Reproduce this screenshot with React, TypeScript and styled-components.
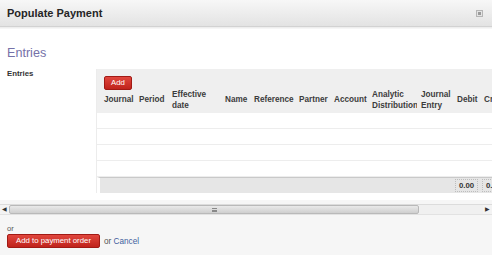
import React from "react";
import styled, { createGlobalStyle } from "styled-components";

const Global = createGlobalStyle`
  html, body { margin: 0; padding: 0; }
  body {
    width: 492px; height: 255px; overflow: hidden;
    background: #f6f6f6;
    font-family: "Liberation Sans", Arial, sans-serif;
  }
`;

const Dialog = styled.div`
  width: 492px; height: 255px;
  display: flex; flex-direction: column;
  overflow: hidden;
`;

const TitleBar = styled.div`
  height: 26px;
  flex: none;
  display: flex; align-items: center; justify-content: space-between;
  padding: 0 9px 0 7px;
  background: linear-gradient(#f7f7f7, #e3e3e3);
  border-bottom: 1px solid #d2d2d2;
  box-shadow: 0 1px 0 #eeeeee;
  margin-bottom: 2px;
`;

const Title = styled.div`
  font-size: 11px; font-weight: bold; color: #252525;
`;

const Body = styled.div`
  background: #fff;
  height: 171px;
  flex: none;
  padding-top: 16px;
  box-sizing: border-box;
  overflow: hidden;
`;

const Heading = styled.div`
  font-size: 12.6px; color: #7571a8;
  line-height: 16px; height: 16px;
  padding-left: 7px;
  margin-bottom: 8px;
`;

const FormRow = styled.div`
  display: flex;
`;

const Label = styled.div`
  width: 96px; flex: none;
  padding-left: 7px; box-sizing: border-box;
  font-size: 7.8px; font-weight: bold; color: #333;
  line-height: 10px;
`;

const Grid = styled.div`
  flex: none;
  width: 560px;
  border-left: 1px solid #ececec;
`;

const Toolbar = styled.div`
  height: 17px; background: #efefef;
  padding: 2px 0 0 7px; box-sizing: border-box;
`;

const RedButton = styled.button<{ $wide?: boolean }>`
  height: 14px;
  padding: 0 ${(p) => (p.$wide ? "8px" : "6px")};
  border: 1px solid #a11a15;
  border-radius: 2px;
  background: linear-gradient(#e0463d, #c0231c);
  color: #fff;
  font-family: "Liberation Sans", Arial, sans-serif;
  font-size: 7.8px;
  line-height: 12px;
  cursor: pointer;
`;

const Table = styled.table`
  border-collapse: separate;
  border-spacing: 0;
  table-layout: fixed;
  width: 560px;
`;

const Th = styled.th<{ $w: number; $first?: boolean }>`
  box-sizing: border-box;
  width: ${(p) => p.$w}px;
  height: 27px;
  padding: 0 3px 0 ${(p) => (p.$first ? "7px" : "4px")};
  background: #efefef;
  font-size: 8.2px; font-weight: bold; color: #3c3c3c;
  text-align: left; vertical-align: middle;
  line-height: 11px;
  white-space: nowrap;
  overflow: hidden;
`;

const Td = styled.td`
  height: 15px;
  padding: 0;
  border-bottom: 1px solid #ededed;
`;

const FootTd = styled.td<{ $first?: boolean }>`
  height: 15px;
  padding: 0 3px;
  background: #e6e6e6;
  border-top: 1px solid #c9c9c9;
  border-left: ${(p) => (p.$first ? "3px solid #fff" : "none")};
  font-size: 7.8px; font-weight: bold; color: #333;
  white-space: nowrap;
`;

const Sum = styled.span`
  display: inline-block;
  padding: 0 3px;
  outline: 1px dotted #bdbdbd;
  line-height: 11px;
`;

const ScrollBar = styled.div`
  margin-top: 4px;
  height: 11px;
  flex: none;
  display: flex; align-items: center;
  background: #f3f3f3;
  border-top: 1px solid #dcdcdc;
  border-bottom: 1px solid #e2e2e2;
  box-sizing: border-box;
`;

const Arrow = styled.span`
  width: 9px; flex: none;
  font-size: 6px; color: #333;
  text-align: center; line-height: 9px;
`;

const Thumb = styled.div`
  width: 410px; height: 9px;
  flex: none;
  display: flex; align-items: center; justify-content: center;
  background: linear-gradient(#e9e9e9, #cfcfcf);
  border: 1px solid #b9b9b9;
  border-radius: 2px;
  box-sizing: border-box;
`;

const Grip = styled.span`
  width: 5px; height: 4px;
  border-top: 1px solid #888; border-bottom: 1px solid #888;
  box-sizing: border-box;
  position: relative;
  &::after {
    content: ""; position: absolute; left: 0; right: 0; top: 1px;
    border-top: 1px solid #888;
  }
`;

const Track = styled.div`
  flex: 1;
  height: 9px;
  background: #f0f0f0;
`;

const Footer = styled.div`
  padding: 9px 7px 0;
  font-size: 7.6px; color: #555;
`;

const Or = styled.div`
  line-height: 9px;
  height: 9px;
`;

const Actions = styled.div`
  display: flex; align-items: center; gap: 4px;
  margin-top: 1px;
  font-size: 8.2px;
`;

const Link = styled.a`
  color: #3f5f9e; text-decoration: none;
`;

const columns: [string, number][] = [
  ["Journal", 38],
  ["Period", 33],
  ["Effective<br>date", 53],
  ["Name", 29],
  ["Reference", 45],
  ["Partner", 35],
  ["Account", 38],
  ["Analytic<br>Distribution", 49],
  ["Journal<br>Entry", 36],
  ["Debit", 27],
  ["Credit", 40],
  ["Amount", 50],
  ["Currency", 50],
  ["Date", 37],
];

export default function App() {
  return (
    <Dialog>
      <Global />
      <TitleBar>
        <Title>Populate Payment</Title>
        <svg width="7" height="7" viewBox="0 0 7 7">
          <rect x="0.5" y="0.5" width="6" height="6" fill="#e4e4e4" stroke="#b5b5b5" />
          <rect x="2" y="2" width="3" height="3" fill="#9a9a9a" />
        </svg>
      </TitleBar>
      <Body>
        <Heading>Entries</Heading>
        <FormRow>
          <Label>Entries</Label>
          <Grid>
            <Toolbar>
              <RedButton>Add</RedButton>
            </Toolbar>
            <Table>
              <thead>
                <tr>
                  {columns.map(([name, w], i) => (
                    <Th key={name} $w={w} $first={i === 0}>
                      {name.split("<br>").map((part, j) => (
                        <React.Fragment key={j}>
                          {j > 0 && <br />}
                          {part}
                        </React.Fragment>
                      ))}
                    </Th>
                  ))}
                </tr>
              </thead>
              <tbody>
                {[0, 1, 2, 3].map((r) => (
                  <tr key={r}>
                    {columns.map(([name]) => (
                      <Td key={name} />
                    ))}
                  </tr>
                ))}
              </tbody>
              <tfoot>
                <tr>
                  {columns.map(([name], i) => (
                    <FootTd key={name} $first={i === 0}>
                      {name === "Debit" || name === "Credit" ? <Sum>0.00</Sum> : null}
                    </FootTd>
                  ))}
                </tr>
              </tfoot>
            </Table>
          </Grid>
        </FormRow>
      </Body>
      <ScrollBar>
        <Arrow>◀</Arrow>
        <Thumb>
          <Grip />
        </Thumb>
        <Track />
        <Arrow>▶</Arrow>
      </ScrollBar>
      <Footer>
        <Or>or</Or>
        <Actions>
          <RedButton $wide>Add to payment order</RedButton>
          <span>
            or <Link href="#">Cancel</Link>
          </span>
        </Actions>
      </Footer>
    </Dialog>
  );
}
